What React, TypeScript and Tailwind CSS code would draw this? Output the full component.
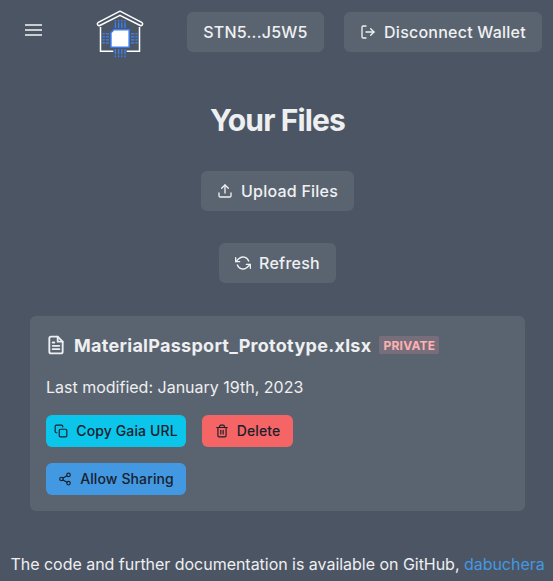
import type { ReactNode } from "react";
import { FiCopy, FiFileText, FiLogOut, FiRefreshCcw, FiShare2, FiTrash2, FiUpload } from "react-icons/fi";

function HouseLogo() {
  const offsets = [0, 3.2, 6.4, 9.6];
  return (
    <svg width="50" height="52" viewBox="0 0 50 52" fill="none" aria-label="Home">
      <path d="M5.5 19V43.3H18.3M31.7 43.3H44.5V19" stroke="#fff" strokeWidth="1.5" />
      <path
        d="M25 3.2L3.3 14.3C1.4 15.4 2.5 18.2 4.8 17.5L25 7.3L45.2 17.5C47.5 18.2 48.6 15.4 46.7 14.3Z"
        stroke="#fff"
        strokeWidth="1.5"
        strokeLinejoin="round"
      />
      <g stroke="#3b82f6" strokeWidth="1.3">
        {offsets.map((o) => (
          <g key={o}>
            <path d={`M${20.4 + o} 12V13.5M${20.4 + o} 14.6V20`} />
            <path d={`M${20.4 + o} 41V46.2M${20.4 + o} 47.6V49.3`} />
            <path d={`M7.4 ${25.8 + o * 0.94}H9.8M10.8 ${25.8 + o * 0.94}H14`} />
            <path d={`M36 ${25.8 + o * 0.94}H39.4M40.4 ${25.8 + o * 0.94}H42.6`} />
          </g>
        ))}
      </g>
      <path d="M19 21.8H34.1V39.1H16V24.8Z" fill="#fff" stroke="#3b82f6" strokeWidth="1.4" />
    </svg>
  );
}

function PanelButton({ width, children }: { width: string; children: ReactNode }) {
  return (
    <button
      className={`flex h-10 shrink-0 items-center justify-center gap-2 rounded-md bg-[#5a6470] text-[16px] font-[550] tracking-[0.23px] whitespace-nowrap text-[#f0f1f3] ${width}`}
    >
      {children}
    </button>
  );
}

function ActionButton({ style, children }: { style: string; children: ReactNode }) {
  return (
    <button
      className={`flex h-8 items-center justify-center gap-2 rounded-md pb-px text-[14px] font-[550] tracking-[0.12px] whitespace-nowrap text-[#1a202c] ${style}`}
    >
      {children}
    </button>
  );
}

export default function App() {
  return (
    <div className="h-[581px] w-[553px] overflow-hidden bg-[#4c5564] font-['Inter',sans-serif] text-[#eeeff1]">
      <header className="flex h-16 items-center">
        <button className="ml-[24.5px] flex h-3 w-[17px] flex-col justify-between -translate-y-[2px]" aria-label="Menu">
          <span className="h-[2px] w-full bg-[#c9ccd1]" />
          <span className="h-[2px] w-full bg-[#c9ccd1]" />
          <span className="h-[2px] w-full bg-[#c9ccd1]" />
        </button>
        <div className="mt-1 ml-[53.5px] w-[50px]">
          <HouseLogo />
        </div>
        <div className="ml-[42px] flex gap-5">
          <PanelButton width="w-[137px]">STN5...J5W5</PanelButton>
          <PanelButton width="w-[198px]">
            <FiLogOut size={16} />
            Disconnect Wallet
          </PanelButton>
        </div>
      </header>

      <main>
        <div className="flex flex-col items-center pl-[2px]">
          <h1 className="mt-[38px] text-[30px] leading-9 font-bold tracking-[-0.85px]">Your Files</h1>
          <div className="mt-[33px]">
            <PanelButton width="w-[153px]">
              <FiUpload size={16} />
              Upload Files
            </PanelButton>
          </div>
          <div className="mt-8">
            <PanelButton width="w-[117px]">
              <FiRefreshCcw size={16} />
              Refresh
            </PanelButton>
          </div>
        </div>

        <section className="mt-[33px] ml-[30px] h-[195px] w-[495px] rounded-md bg-[#5a6470] px-4 pt-4">
          <div className="flex h-[27px] items-center">
            <FiFileText size={20} strokeWidth={2.2} className="-mt-px" />
            <h2 className="ml-2 text-[18px] font-bold tracking-[0.28px]">MaterialPassport_Prototype.xlsx</h2>
            <span className="-mt-px ml-2 flex h-[18px] w-[60px] items-center justify-center rounded-xs bg-[#766f7b] pt-px text-[12px] font-bold tracking-[0.2px] text-[#feb2b2]">
              PRIVATE
            </span>
          </div>
          <p className="mt-4 text-[16px] leading-6">Last modified: January 19th, 2023</p>
          <div className="mt-4 flex gap-4">
            <ActionButton style="w-[140px] bg-[#0bc5ea]">
              <FiCopy size={14} />
              Copy Gaia URL
            </ActionButton>
            <ActionButton style="w-[91px] bg-[#f56565]">
              <FiTrash2 size={14} />
              Delete
            </ActionButton>
          </div>
          <div className="mt-4">
            <ActionButton style="w-[140px] bg-[#4299e1]">
              <FiShare2 size={14} />
              Allow Sharing
            </ActionButton>
          </div>
        </section>
      </main>

      <footer className="mt-[41px] pl-[10.5px] text-[16px] leading-6 tracking-[-0.03px] whitespace-nowrap">
        The code and further documentation is available on GitHub, <a className="text-[#4299e1]">dabuchera</a>
      </footer>
    </div>
  );
}
